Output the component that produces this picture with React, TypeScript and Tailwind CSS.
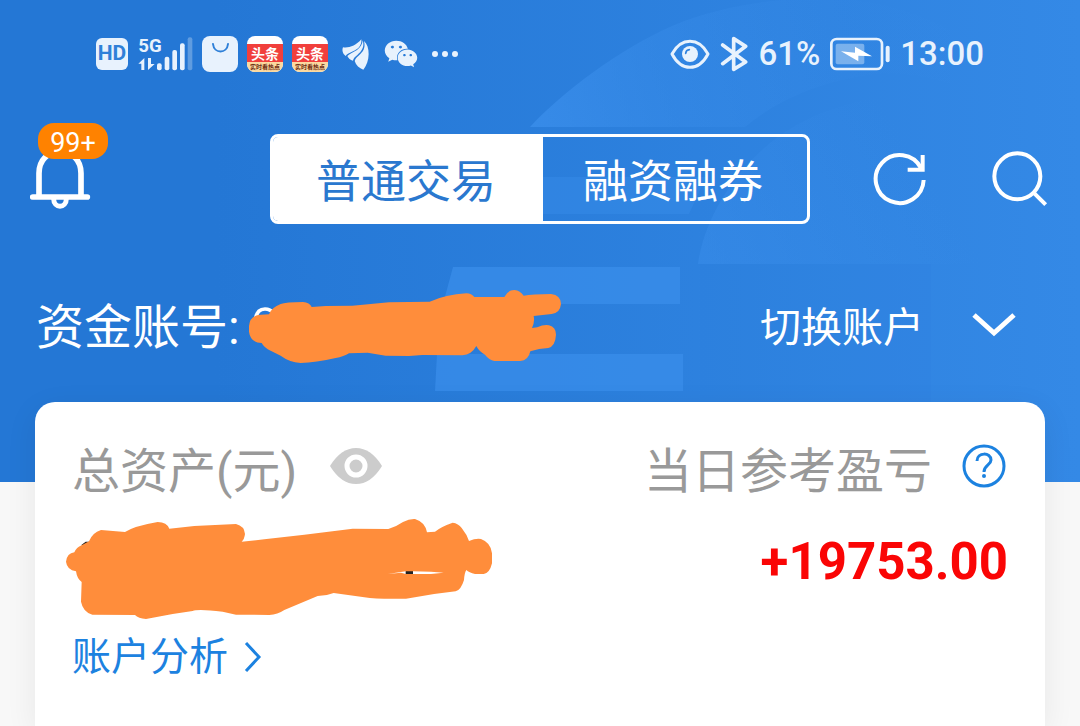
import { useState } from "react";
import { FaWeixin } from "react-icons/fa";

const MODES = [
  { label: "普通交易", value: "normal" },
  { label: "融资融券", value: "margin" },
];

// Faint globe-and-bars logo behind the header content.
function HeaderWatermark() {
  return (
    <svg
      viewBox="0 0 1080 482"
      preserveAspectRatio="xMaxYMin slice"
      className="absolute inset-0 h-full w-full"
      aria-hidden="true"
    >
      <defs>
        <linearGradient id="dome" gradientUnits="userSpaceOnUse" x1="530" y1="127" x2="860" y2="20">
          <stop offset="0" stopColor="#3a8eeb" stopOpacity="0.8" />
          <stop offset="0.4" stopColor="#3a8eeb" stopOpacity="0.4" />
          <stop offset="1" stopColor="#3a8eeb" stopOpacity="0.05" />
        </linearGradient>
        <linearGradient id="inner" gradientUnits="userSpaceOnUse" x1="690" y1="264" x2="900" y2="130">
          <stop offset="0" stopColor="#3a8eeb" stopOpacity="0.5" />
          <stop offset="1" stopColor="#3a8eeb" stopOpacity="0" />
        </linearGradient>
      </defs>
      <path
        d="M530 127 C562 92 620 49 672 26 C722 5 775 -2 830 -2 C870 0 910 8 950 30 L950 84 C920 74 895 73 877 74 C825 80 780 98 745 127 Z"
        fill="url(#dome)"
      />
      <path d="M698 264 C703 225 728 178 770 143 C810 110 870 93 931 93 L1000 110 V264 Z" fill="url(#inner)" />
      <path d="M500 177 H706 L689 214 H480 Z" fill="#3a8eeb" fillOpacity="0.4" />
      <path d="M453 267 H680 V304 H443 Z" fill="#3a8eeb" fillOpacity="0.7" />
      <path d="M437 354 H683 V391 H435 Z" fill="#3a8eeb" fillOpacity="0.7" />
      <path d="M700 264 H931 V482 H700 Z" fill="#2c7fdc" fillOpacity="0.12" />
    </svg>
  );
}

function SignalIcon() {
  return (
    <svg width="56" height="36" viewBox="171 33 168 108" fill="#e8f2fd" aria-hidden="true">
      <text x="175" y="80" fontSize="56" fontWeight="700" fontFamily="Roboto, sans-serif">
        5G
      </text>
      <path d="M193 99 V135 H184 V116 H175 Z" />
      <path d="M204 99 V135 L224 117 H213 V99 Z" />
      <rect x="231" y="115" width="14" height="21" rx="6" />
      <rect x="254" y="95" width="14" height="41" rx="6" />
      <rect x="277" y="75" width="14" height="61" rx="6" />
      <rect x="300" y="55" width="14" height="81" rx="6" />
      <rect x="323" y="37" width="14" height="99" rx="6" opacity="0.3" />
    </svg>
  );
}

function BagIcon() {
  return (
    <svg width="36" height="36" viewBox="0 0 36 36" fill="none" aria-hidden="true">
      <rect width="36" height="36" rx="8" fill="#e8f2fd" />
      <path d="M11 8 C12 18 25 18 26 8" stroke="#2f80d8" strokeWidth="2" strokeLinecap="round" />
    </svg>
  );
}

function ToutiaoIcon() {
  return (
    <span className="flex h-9 w-9 flex-col overflow-hidden rounded-lg bg-white pt-2 text-center font-bold">
      <span className="h-[18px] bg-[#f13f3c] text-[14px] leading-[20px] text-white">头条</span>
      <span className="h-[10px] bg-[#fbd9a0] text-[6px] leading-[9px] whitespace-nowrap text-[#6b2a10]">
        实时看热点
      </span>
    </span>
  );
}

function WingIcon() {
  return (
    <svg width="38" height="38" viewBox="291 30 114 114" fill="#e8f2fd" aria-hidden="true">
      <path d="M309 67 C326 70 348 62 364 43 C366 64 352 73 339 79 C328 84 321 87 317 93 C309 87 305 77 309 67 Z" />
      <path d="M368 46 C375 66 364 80 352 90 C344 96 340 101 339 107 C331 105 325 100 322 93 C328 86 341 82 351 75 C362 67 367 58 368 46 Z" />
      <path d="M372 48 C391 64 391 110 370 134 C358 130 348 121 344 108 C346 100 354 94 361 87 C373 76 376 64 372 48 Z" />
    </svg>
  );
}

function StatusBar() {
  return (
    <div className="flex h-[108px] items-center justify-between px-24 text-[#e8f2fd]">
      <div className="flex items-center gap-[9px]">
        <span className="flex h-8 w-8 items-center justify-center rounded-md bg-[#e8f2fd] text-[21px] font-bold text-[#2f80d8]">
          HD
        </span>
        <SignalIcon />
        <BagIcon />
        <ToutiaoIcon />
        <ToutiaoIcon />
        <WingIcon />
        <FaWeixin className="h-[34px] w-[34px]" />
        <svg width="36" height="8" viewBox="0 0 36 8" fill="currentColor" aria-hidden="true">
          <circle cx="8" cy="4" r="3" />
          <circle cx="18" cy="4" r="3" />
          <circle cx="28" cy="4" r="3" />
        </svg>
      </div>
      <div className="flex items-center gap-[10px] text-[33px] leading-10 font-medium">
        <svg width="40" height="36" viewBox="35 34 120 108" fill="none" stroke="currentColor" aria-hidden="true">
          <path d="M41 88 Q62 50 95 50 Q128 50 149 88 Q128 128 95 128 Q62 128 41 88 Z" strokeWidth="9" strokeLinejoin="round" />
          <circle cx="95" cy="88" r="24" fill="currentColor" stroke="none" />
          <path d="M82 86 Q83 76 93 75" stroke="#3083df" strokeWidth="5" strokeLinecap="round" />
        </svg>
        <svg width="28" height="36" viewBox="188 34 84 108" fill="none" stroke="currentColor" aria-hidden="true">
          <path d="M196 61 L265 112 L229 134 V42 L265 65 L196 117" strokeWidth="11" strokeLinecap="round" strokeLinejoin="round" />
        </svg>
        <span>61%</span>
        <svg width="60" height="34" viewBox="507 37 180 102" fill="none" aria-hidden="true">
          <rect x="511" y="43" width="152" height="90" rx="16" stroke="currentColor" strokeWidth="8" />
          <rect x="524" y="57" width="86" height="62" rx="6" fill="currentColor" fillOpacity="0.4" />
          <path d="M540 80 L582 84 V66 L633 95 L592 93 V110 Z" fill="white" />
          <rect x="674" y="63" width="12" height="50" rx="6" fill="currentColor" />
        </svg>
        <span>13:00</span>
      </div>
    </div>
  );
}

function AccountMask() {
  return (
    <svg width="314" height="76" viewBox="57 54 942 228" aria-hidden="true">
      <path d="M80 146 Q84 117 108 117 Q124 117 134 130" fill="none" stroke="white" strokeWidth="11" />
      <path
        d="M60 168 Q62 136 96 134 L120 133 Q128 112 155 102 Q170 96 222 96 Q242 98 248 111 L290 108 L370 107 L480 97 L602 95 Q650 74 712 70 Q728 71 736 81 L826 81 Q836 60 856 60 Q874 62 884 77 Q910 72 966 72 Q996 76 996 102 Q993 130 968 132 L914 138 Q918 154 909 174 L925 172 Q944 163 960 166 Q981 172 981 194 Q979 228 958 234 Q930 235 904 244 Q898 272 874 273 L796 273 Q780 270 768 254 Q750 244 742 228 Q728 254 700 256 L580 255 L540 258 L470 257 L416 248 L360 250 Q345 260 320 264 Q260 278 215 279 Q180 276 155 257 L125 242 Q106 234 98 219 Q64 218 60 185 Z"
        fill="#ff8d3b"
      />
    </svg>
  );
}

function AssetMask() {
  return (
    <svg width="432" height="110" viewBox="39 0 1296 330" className="-ml-2" aria-hidden="true">
      <path d="M90 106 L104 95 H120 V108 Z M1064 182 H1086 V192 H1064 Z" fill="#222222" />
      <path
        fillRule="evenodd"
        d="M45 155 Q48 130 70 127 Q76 112 92 106 L114 94 Q124 68 150 60 L222 66 Q250 48 320 36 Q348 37 355 56 L430 48 L555 42 Q580 48 582 72 Q580 88 572 95 L640 88 L760 74 L905 56 L1012 57 Q1036 50 1056 36 Q1075 26 1092 27 Q1122 36 1128 67 L1152 65 Q1170 50 1205 38 Q1222 40 1232 54 Q1248 74 1254 93 Q1275 84 1290 87 Q1320 98 1323 130 V160 Q1316 190 1298 192 L1272 192 Q1254 188 1246 180 Q1240 190 1239 210 Q1230 240 1214 244 Q1140 252 1065 266 Q980 268 940 262 L848 249 Q826 258 800 258 L700 300 Q680 313 655 315 L555 314 L515 305 Q440 296 425 303 L365 312 L285 327 Q262 325 252 315 L124 314 Q96 306 90 275 L92 216 Q78 206 75 184 Q48 180 45 155 Z M1010 192 L1050 188 L1064 192 H1086 L1140 192 L1178 188 L1140 185 L1086 184 H1064 Z"
        fill="#ff8d3b"
      />
    </svg>
  );
}

export default function App() {
  const [mode, setMode] = useState("normal");

  return (
    <div className="flex min-h-screen flex-col bg-[#f8f8f8] font-[Roboto,'Noto_Sans_CJK_SC',sans-serif]">
      <header className="relative bg-linear-to-r from-[#2477d5] from-20% to-[#3489e6] pb-20 text-white">
        <HeaderWatermark />
        <div className="relative">
          <StatusBar />

          <nav className="grid h-[142px] grid-cols-[1fr_540px_1fr] items-center px-8">
            <button type="button" aria-label="消息" className="relative -ml-0.5 justify-self-start">
              <svg width="62" height="66" viewBox="30 108 186 198" fill="none" stroke="currentColor" strokeWidth="17">
                <path d="M57 258 V190 C57 150 82 126 120 126 C158 126 183 150 183 190 V258" />
                <path d="M38 261 H202" strokeLinecap="round" />
                <path d="M101 266 C101 296 139 296 139 266" strokeWidth="15" />
              </svg>
              <span className="absolute -top-[23px] left-2 flex h-9 w-[70px] items-center justify-center rounded-2xl bg-[#ff8200] pt-1 text-[27px] leading-8">
                99+
              </span>
            </button>

            <div className="grid h-[90px] grid-cols-[270px_1fr] overflow-hidden rounded-lg border-3 border-white">
              {MODES.map((m) => (
                <button
                  key={m.value}
                  type="button"
                  onClick={() => setMode(m.value)}
                  className={`pt-2 pr-1 text-[45px] leading-[60px] ${
                    mode === m.value ? "bg-white text-[#2a78cf]" : "text-white"
                  }`}
                >
                  {m.label}
                </button>
              ))}
            </div>

            <div className="flex items-center gap-16 justify-self-end">
              <button type="button" aria-label="刷新">
                <svg width="56" height="56" viewBox="33 63 168 168" fill="none" stroke="currentColor" strokeWidth="12">
                  <path d="M188 150 A72 72 0 1 1 180 114" />
                  <path d="M185 75 V119 H140" />
                </svg>
              </button>
              <button type="button" aria-label="搜索">
                <svg width="56" height="56" viewBox="396 63 168 168" fill="none" stroke="currentColor" strokeWidth="12">
                  <circle cx="472" cy="139" r="69" />
                  <path d="M520 187 L557 224" />
                </svg>
              </button>
            </div>
          </nav>

          <div className="flex h-[152px] items-center justify-between pr-16 pl-9">
            <div className="flex items-center gap-2">
              <span className="pt-1 text-[48px] leading-[60px]">资金账号:</span>
              <AccountMask />
            </div>
            <button type="button" className="flex items-center gap-12 text-[41px] leading-[60px]">
              <span className="pt-1">切换账户</span>
              <svg width="44" height="28" viewBox="0 0 44 28" fill="none" stroke="currentColor" strokeWidth="5" aria-hidden="true">
                <path d="M2 3 L22 21 L42 3" />
              </svg>
            </button>
          </div>
        </div>
      </header>

      <main className="relative mx-[35px] -mt-20 flex-1 rounded-t-[20px] bg-white px-[37px] pt-7 shadow-[0_8px_32px_rgba(0,0,0,0.07)]">
        <div className="flex items-center justify-between text-[48px] leading-[60px] text-[#999999]">
          <div className="flex items-center gap-7">
            <h2 className="pt-3">总资产(元)</h2>
            <button type="button" aria-label="隐藏金额">
              <svg width="62" height="36" viewBox="0 0 62 36" aria-hidden="true">
                <path d="M5 18 Q16 0 31 0 Q46 0 57 18 Q46 36 31 36 Q16 36 5 18 Z" fill="#cccccc" />
                <circle cx="31" cy="18" r="9" fill="#cccccc" stroke="white" strokeWidth="5" />
              </svg>
            </button>
          </div>
          <div className="flex items-center gap-7">
            <h2 className="pt-3">当日参考盈亏</h2>
            <button type="button" aria-label="说明">
              <svg width="48" height="48" viewBox="0 0 48 48" fill="none" stroke="#1c82e0" aria-hidden="true">
                <circle cx="24" cy="24" r="20" strokeWidth="3" />
                <path d="M17 19 C17 10 31 10 31 18 C31 23 24 23 24 30" strokeWidth="3" />
                <circle cx="24" cy="34" r="2" fill="#1c82e0" stroke="none" />
              </svg>
            </button>
          </div>
        </div>

        <div className="mt-2 flex items-start justify-between">
          <AssetMask />
          <p className="text-[51px] leading-[104px] font-bold text-[#fa0505]">+19753.00</p>
        </div>

        <a href="#analysis" className="inline-flex items-center gap-4 text-[39px] leading-[74px] text-[#1c82e0]">
          账户分析
          <svg width="18" height="32" viewBox="0 0 18 32" fill="none" stroke="currentColor" strokeWidth="3" aria-hidden="true">
            <path d="M2 2 L15 16 L2 30" />
          </svg>
        </a>
      </main>
    </div>
  );
}
